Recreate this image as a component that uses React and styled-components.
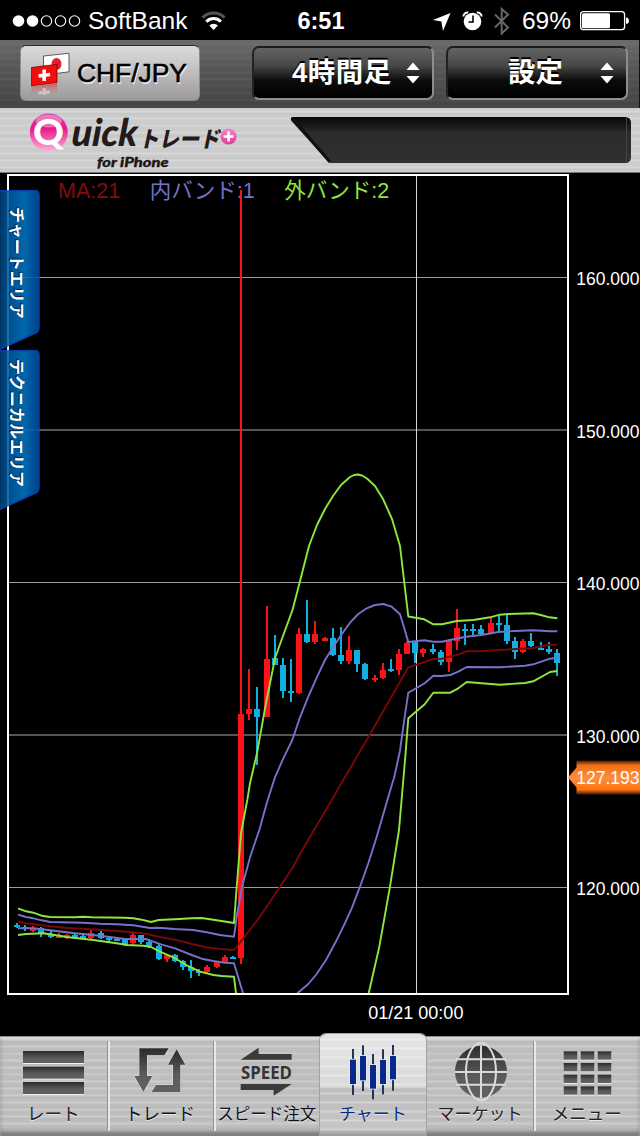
import React from 'react';
import styled, { createGlobalStyle, css } from 'styled-components';

const GlobalStyle = createGlobalStyle`
  * { box-sizing: border-box; }
  body {
    margin: 0;
    background: #000;
    font-family: "Liberation Sans", "Noto Sans CJK JP", sans-serif;
  }
  svg { display: block; flex: none; }
`;

const brushedLight = css`
  background-image:
    repeating-linear-gradient(180deg, rgba(255,255,255,0) 0 2px, rgba(255,255,255,.22) 3px 4px, rgba(255,255,255,0) 5px 7px),
    repeating-linear-gradient(180deg, rgba(90,90,90,0) 0 5px, rgba(90,90,90,.08) 6px, rgba(90,90,90,0) 7px 11px);
`;

const brushedDark = css`
  background-image:
    repeating-linear-gradient(180deg, rgba(255,255,255,0) 0 3px, rgba(255,255,255,.05) 4px, rgba(255,255,255,0) 6px 7px),
    linear-gradient(180deg, #6b696a 0, #575455 45%, #454243 100%);
`;

const Screen = styled.div`
  width: 640px;
  height: 1136px;
  display: flex;
  flex-direction: column;
  overflow: hidden;
  background: #000;
`;

/* Status bar */
const StatusBar = styled.div`
  height: 40px;
  flex: none;
  display: grid;
  grid-template-columns: 1fr auto 1fr;
  align-items: center;
  padding: 1px 10px 0 12px;
  color: #fff;
  font-size: 24.5px;
  line-height: 40px;
`;
const StatusGroup = styled.div`
  display: flex;
  align-items: center;
  justify-content: ${p => (p.$end ? 'flex-end' : 'flex-start')};
  gap: ${p => p.$gap}px;
`;
const Clock = styled.span`
  font-size: 23.5px;
  font-weight: 700;
`;

/* Toolbar */
const Toolbar = styled.div`
  height: 68px;
  flex: none;
  display: flex;
  align-items: flex-start;
  padding: 5px 11px 0 20px;
  border-right: 1px solid #111;
  background-color: #555;
  ${brushedDark}
`;
const PairButton = styled.button`
  width: 180px;
  height: 56px;
  display: flex;
  align-items: center;
  padding: 0 0 0 10px;
  gap: 7px;
  border: 1px solid #8d8b8b;
  border-top-color: #2c2a2b;
  border-radius: 6px;
  background: linear-gradient(180deg, #dcdada 0, #c5c3c3 40%, #9b9999 100%);
  font-family: inherit;
  font-size: 26.4px;
  color: #000;
  -webkit-text-stroke: .6px #000;
  text-shadow: 1px 2px 0 rgba(255,255,255,.75);
`;
const SelectButton = styled.button`
  width: 182px;
  height: 54px;
  margin: 1px 0 0 ${p => p.$left}px;
  display: grid;
  grid-template-columns: 1fr 14px;
  align-items: center;
  padding: 0 12px 0 ${p => p.$inset}px;
  border: 2px solid #8f8d8d;
  border-top-color: #1c1a1b;
  border-left-color: #232122;
  border-radius: 7px;
  background: linear-gradient(180deg, #636363 0, #474747 35%, #0c0c0c 65%, #000 100%);
  color: #fff;
  font-family: "Liberation Sans", "Noto Sans CJK JP", sans-serif;
  font-size: 27.4px;
  font-weight: 700;
  letter-spacing: ${p => p.$tracking}px;
  line-height: 1;
  text-align: left;
  text-shadow: 0 -2px 0 #000;
`;

/* Brand banner */
const Banner = styled.div`
  height: 65px;
  flex: none;
  display: flex;
  background-color: #cccccc;
  border-bottom: 1px solid #777;
  ${brushedLight}
`;

/* Chart */
const ChartPanel = styled.div`
  position: relative;
  height: 863px;
  flex: none;
`;
const Legend = styled.div`
  position: absolute;
  left: 58px;
  top: 4px;
  display: flex;
  gap: 29.5px;
  font-family: "Liberation Sans", "Noto Sans CJK JP", sans-serif;
  font-size: 21.5px;
  line-height: 28px;
`;
const LegendItem = styled.span`
  color: ${p => p.$color};
`;
const SideTabs = styled.div`
  position: absolute;
  left: 0;
  top: 17px;
  display: flex;
  flex-direction: column;
`;
const SideTab = styled.button`
  position: relative;
  width: 40px;
  height: 160px;
  padding: 0;
  border: 0;
  background: none;
  color: #fff;
`;
const TabLabel = styled.span`
  position: absolute;
  left: 8px;
  top: ${p => p.$top}px;
  writing-mode: vertical-rl;
  text-orientation: sideways;
  font-family: "Noto Sans CJK JP", sans-serif;
  font-size: 16px;
  font-weight: 700;
  line-height: 20px;
  white-space: nowrap;
  text-shadow: -1px 1px 1px #001c40;
`;

/* Bottom navigation */
const TabBar = styled.nav`
  height: 100px;
  flex: none;
  display: grid;
  grid-template-columns: repeat(6, minmax(0, 1fr));
  background-color: #bebebe;
  box-shadow: inset 0 1px 0 #8c8c8c, inset 0 3px 2px rgba(255,255,255,.5), inset 0 -5px 4px rgba(80,80,80,.6);
  ${brushedLight}
`;
const NavItem = styled.button`
  position: relative;
  display: flex;
  flex-direction: column;
  align-items: center;
  border: 0;
  padding: 0;
  margin: 5px 0;
  background: none;
  box-shadow: ${p => (p.$plain ? 'none' : '1px 0 0 #949292, 3px 0 0 #e8e8e8')};
  color: ${p => p.$color};
  ${p => p.$active && css`
    z-index: 1;
    margin: -2px 1px 0 0;
    padding-top: 7px;
    border-radius: 6px 6px 0 0;
    background:
      repeating-linear-gradient(180deg, rgba(255,255,255,0) 0 4px, rgba(255,255,255,.3) 5px 6px, rgba(255,255,255,0) 7px 9px),
      linear-gradient(180deg, #e6e6e6 0, #d9d9d9 52%, #bdbdbd 54%, #c6c6c6 92%, #999 100%);
    box-shadow: 0 0 0 1px #a2a0a0;
  `}
`;
const NavLabel = styled.span`
  font-family: "Noto Sans CJK JP", sans-serif;
  font-size: ${p => p.$size}px;
  line-height: 24px;
  white-space: nowrap;
  text-shadow: 0 1px 0 rgba(255,255,255,.7);
`;

const SignalDots = () => (
  <svg width="69" height="14" viewBox="12 13.5 69 14">
    {[18.5, 32.5, 46.5, 60.5, 74.5].map((x, i) => (
      <circle key={x} cx={x} cy="20.5" r={i < 2 ? 5.8 : 5.2} fill={i < 2 ? '#fff' : 'none'} stroke="#fff" strokeWidth={i < 2 ? 0 : 1.1} />
    ))}
  </svg>
);

const Wifi = () => (
  <svg width="26" height="20" viewBox="202 10 26 20" fill="none" strokeWidth="3">
    <path d="M203.6 16.6a15.5 15.5 0 0 1 22 0" stroke="#555" />
    <path d="M207.3 20.6a10.4 10.4 0 0 1 14.6 0" stroke="#fff" />
    <path d="M214.6 29l-4.3-4.6a6.2 6.2 0 0 1 8.6 0z" fill="#fff" />
  </svg>
);

const StatusIcons = () => (
  <svg width="80" height="28" viewBox="433 6 80 28">
    <path d="M450.5 12L443 30l-1.6-9.4L433 19z" fill="#fff" />
    <circle cx="472.5" cy="20.5" r="8.8" fill="#fff" />
    <path d="M463.4 15.6a4 4 0 0 1 4.8-4M481.6 15.6a4 4 0 0 0-4.8-4" stroke="#fff" strokeWidth="2" fill="none" />
    <path d="M473 14.5v6.5h-4.5" stroke="#000" strokeWidth="1.6" fill="none" />
    <path d="M495 13.5l13 13-6.3 6V8l6.3 5.5-13 13" stroke="#666" strokeWidth="2" fill="none" />
  </svg>
);

const Battery = () => (
  <svg width="50" height="20" viewBox="580 10.5 50 20">
    <rect x="580.6" y="11.2" width="44" height="18" rx="3" fill="none" stroke="#fff" strokeWidth="1.3" />
    <rect x="582" y="12.7" width="28" height="15" rx="1.5" fill="#fff" />
    <path d="M626 17.3h1.5q1.5 1 1.5 3t-1.5 3H626z" fill="#fff" />
  </svg>
);

const Flags = () => (
  <svg width="39" height="46" viewBox="31 56 39 46">
    <defs>
      <linearGradient id="mirror" x1="0" y1="0" x2="0" y2="1">
        <stop offset="0" stopColor="#d33" stopOpacity=".75" />
        <stop offset="1" stopColor="#c88" stopOpacity="0" />
      </linearGradient>
    </defs>
    <path d="M43.5 62L69 59.300v18.500L43.500 81z" fill="#fff" stroke="#222" strokeWidth=".7" />
    <ellipse cx="56.500" cy="70" rx="5" ry="6" fill="#e0202a" />
    <path d="M31.300 73.500L57 70.300v18.200l-25.700 3.300z" fill="#f20d0d" stroke="#600" strokeWidth=".7" />
    <path d="M44.200 75.500v11.500M38.500 82l11.600-1.500" stroke="#fff" strokeWidth="3.600" />
    <path d="M31.300 92.500L57 89.200v11.500H31.300z" fill="url(#mirror)" />
    <path d="M44.200 94v7M38.500 99l11.600-1" stroke="#fff" strokeOpacity=".4" strokeWidth="3" />
  </svg>
);

const UpDown = () => (
  <svg width="14" height="22" viewBox="0 0 14 22" fill="#fff">
    <path d="M7 .5l6.500 7.500H.5zM7 21.500l6.500-7.500H.5z" />
  </svg>
);

const BrandHeader = () => (
  <svg width="640" height="64" viewBox="0 108 640 64">
    <defs>
      <linearGradient id="pink" x1="0" y1="0" x2="0" y2="1">
        <stop offset="0" stopColor="#dc3c9c" />
        <stop offset=".4" stopColor="#e5198a" />
        <stop offset="1" stopColor="#fbb6dc" />
      </linearGradient>
      <linearGradient id="badge" x1="0" y1="0" x2="0" y2="1">
        <stop offset="0" stopColor="#f08cc4" />
        <stop offset="1" stopColor="#e0389a" />
      </linearGradient>
      <linearGradient id="slot" x1="0" y1="0" x2="0" y2="1">
        <stop offset="0" stopColor="#060606" />
        <stop offset=".35" stopColor="#2b2b2b" />
        <stop offset="1" stopColor="#303030" />
      </linearGradient>
    </defs>
    <circle cx="48.800" cy="132.500" r="19" fill="url(#pink)" />
    <ellipse cx="48.800" cy="121" rx="13" ry="6.500" fill="#fff" fillOpacity=".35" />
    <text x="33" y="145" textLength="31" lengthAdjust="spacingAndGlyphs" fontFamily="Lato" fontWeight="900" fontSize="36" fill="#fff">Q</text>
    <text transform="translate(71 146) skewX(-4)" textLength="66" lengthAdjust="spacingAndGlyphs" fontFamily="Lato" fontStyle="italic" fontWeight="900" fontSize="38" fill="#231a1c">uick</text>
    <text transform="translate(138.500 146.500) skewX(-12)" textLength="81" lengthAdjust="spacingAndGlyphs" fontFamily="Noto Sans CJK JP" fontWeight="900" fontSize="22" fill="#231a1c">トレード</text>
    <circle cx="228.600" cy="136.500" r="8" fill="url(#badge)" />
    <path d="M228.600 131.500v10M223.600 136.500h10" stroke="#fff" strokeWidth="2.600" />
    <text x="97" y="167" textLength="71.500" lengthAdjust="spacingAndGlyphs" fontFamily="Lato" fontStyle="italic" fontWeight="900" fontSize="14" fill="#1c1617" stroke="#1c1617" strokeWidth=".35">for iPhone</text>
    <path d="M293 117h332q6 0 6 6v34q0 6-6 6H331q-2 0-3.500-2L291.500 121q-2-4 1.500-4z" fill="url(#slot)" />
    <path d="M293 119l37 43" stroke="#111" strokeWidth="3" />
    <path d="M626.500 118v44" stroke="#444" strokeWidth="1" />
  </svg>
);

/* [direction, x, high, low, body top, body bottom] */
const toCandles = (rows, ox, oy) => rows.map(([d, x, h, l, t, b]) => [d, x / 3 + ox, h / 3 + oy, l / 3 + oy, t / 3 + oy, b / 3 + oy]);
const candles = [
  ...toCandles([
    ['d', 50, 188, 203, 195, 200], ['d', 75, 195, 212, 200, 207], ['u', 98, 198, 217, 206, 214],
    ['d', 123, 200, 230, 205, 223], ['d', 152, 212, 234, 224, 229], ['u', 177, 218, 234, 224, 233],
    ['u', 201, 222, 238, 224, 233], ['d', 225, 218, 236, 225, 231], ['d', 249, 226, 238, 229, 235],
    ['u', 273, 207, 236, 219, 233], ['d', 303, 210, 238, 219, 233], ['d', 327, 231, 248, 234, 240],
    ['d', 351, 232, 243, 237, 242], ['d', 375, 235, 259, 238, 254], ['u', 399, 220, 254, 225, 249],
    ['d', 423, 225, 251, 226, 246], ['d', 447, 240, 265, 246, 258], ['d', 477, 250, 300, 258, 297],
    ['u', 501, 284, 306, 284, 297], ['d', 525, 281, 307, 284, 304], ['d', 549, 300, 330, 303, 321],
    ['d', 573, 300, 354, 322, 334], ['d', 597, 326, 348, 332, 340], ['u', 621, 315, 342, 321, 336],
    ['u', 651, 304, 324, 305, 321], ['u', 675, 285, 307, 290, 305], ['d', 699, 288, 298, 290, 295],
  ], 0, 860),
  ['u', 241, 190, 964, 714, 957.5],
  ...toCandles([
    ['u', 87, 268, 420, 387, 402], ['d', 111, 320, 555, 387, 411], ['u', 141, 78, 411, 237, 411],
    ['d', 165, 165, 255, 234, 255], ['d', 189, 235, 353, 255, 332], ['d', 213, 237, 367, 332, 339],
    ['u', 237, 144, 343, 162, 339], ['d', 261, 60, 189, 162, 186], ['u', 285, 122, 191, 162, 186],
    ['u', 315, 172, 183, 173, 183], ['d', 339, 145, 228, 174, 225], ['d', 363, 141, 251, 225, 243],
    ['u', 387, 168, 251, 210, 243], ['d', 411, 210, 276, 210, 252], ['d', 435, 250, 301, 252, 297],
    ['u', 465, 285, 305, 293, 299], ['u', 489, 250, 296, 269, 293], ['d', 513, 237, 276, 268, 273],
    ['u', 537, 207, 285, 222, 270], ['u', 561, 183, 222, 189, 222],
  ], 220, 580),
  ...toCandles([
    ['d', 75, 185, 248, 186, 219], ['u', 99, 204, 232, 207, 219], ['d', 129, 192, 222, 208, 215],
    ['d', 153, 210, 254, 216, 246], ['u', 177, 177, 276, 182, 246], ['u', 201, 87, 209, 144, 182],
    ['d', 225, 132, 196, 146, 151], ['d', 249, 133, 167, 146, 151], ['d', 273, 136, 165, 146, 163],
    ['u', 303, 113, 163, 129, 160], ['d', 327, 108, 157, 128, 134], ['d', 351, 102, 191, 136, 182],
    ['d', 375, 172, 236, 182, 216], ['u', 399, 177, 218, 182, 216], ['d', 423, 158, 201, 183, 198],
    ['d', 453, 187, 210, 203, 207], ['d', 477, 187, 221, 206, 217], ['d', 501, 207, 288, 219, 249],
  ], 390, 580),
];

const seg = (ox, oy, pts) => pts.map(([x, y]) => `${(x / 3 + ox).toFixed(1)},${(y / 3 + oy).toFixed(1)}`).join(' ');
const GREEN = '#8fe63c';
const VIOLET = '#7472cc';
const MAROON = '#780808';

const lines = [
  [MAROON, [
    seg(0, 860, [[54, 185], [78, 190], [125, 196], [200, 204], [275, 208], [350, 213], [400, 217], [440, 222], [480, 231], [525, 239], [575, 252], [620, 262], [660, 267], [702, 270]]),
    seg(220, 780, [[70, 475], [115, 417], [150, 365], [180, 320], [217, 265], [250, 205], [300, 120], [345, 43], [370, 0]]),
    seg(220, 580, [[450, 463], [540, 305], [565, 262]]),
    seg(390, 580, [[130, 237], [156, 236], [205, 224], [228, 214], [280, 213], [430, 204], [475, 195], [502, 194]]),
  ]],
  [VIOLET, [
    seg(0, 860, [[54, 164], [78, 171], [100, 175], [125, 181], [150, 186], [250, 188], [300, 191], [350, 193], [400, 196], [450, 204], [475, 203], [525, 207], [580, 210], [620, 217], [660, 225], [702, 230]]),
    seg(220, 780, [[50, 410], [66, 320], [92, 225], [118, 150], [141, 67]]),
    seg(220, 580, [[143, 660], [165, 592], [190, 535], [217, 480], [240, 412], [265, 350], [290, 293], [315, 240], [340, 200], [365, 163], [390, 128], [415, 102], [440, 85], [465, 75], [490, 72], [515, 80], [540, 103], [553, 145], [565, 186]]),
    seg(390, 580, [[103, 181], [130, 185], [156, 185], [180, 180], [228, 170], [275, 165], [325, 156], [375, 153], [430, 151], [480, 154], [502, 154]]),
  ]],
  [VIOLET, [
    seg(0, 860, [[54, 205], [100, 205], [150, 211], [225, 220], [300, 227], [375, 237], [437, 237], [460, 245], [485, 254], [525, 265], [575, 285], [605, 296], [640, 303], [675, 308], [702, 310], [729, 400]]),
  ]],
  [VIOLET, [
    seg(220, 780, [[232, 640], [265, 612], [290, 582], [318, 540], [345, 490], [370, 440], [395, 385], [420, 320], [445, 250], [470, 170], [495, 85], [520, 0]]),
    seg(220, 580, [[522, 595], [540, 512], [552, 425], [565, 338]]),
    seg(390, 580, [[104, 310], [130, 287], [155, 288], [181, 285], [205, 275], [230, 261], [330, 262], [405, 257], [430, 253], [480, 236], [502, 233]]),
  ]],
  [GREEN, [
    seg(0, 860, [[54, 145], [78, 154], [100, 158], [125, 167], [150, 171], [225, 172], [250, 170], [275, 172], [375, 173], [400, 175], [425, 179], [453, 186], [476, 180], [525, 178], [575, 175], [605, 174], [650, 181], [702, 189]]),
    seg(220, 780, [[50, 320], [63, 160]]),
    seg(220, 580, [[82, 660], [90, 610], [111, 520], [135, 385], [165, 235], [190, 165], [217, 92], [241, 0]]),
    '309,546 317,525 325,509 333,496 341,485 350,477 354,475 358,474.5 362,475.5 367,478.5 375,486 383,499 392,519 400,546 408.3,616.5',
    seg(390, 580, [[103, 118], [130, 133], [156, 133], [200, 123], [250, 120], [300, 112], [330, 104], [355, 102], [430, 100], [452, 105], [478, 112], [502, 115]]),
  ]],
  [GREEN, [
    seg(0, 860, [[54, 225], [78, 222], [130, 220], [160, 224], [200, 231], [280, 240], [350, 250], [380, 255], [430, 257], [453, 261], [480, 275], [520, 292], [560, 316], [600, 335], [640, 345], [665, 348], [702, 350], [708, 400]]),
  ]],
  [GREEN, [
    seg(220, 780, [[446, 640], [478, 500], [510, 320], [537, 150], [550, 0]]),
    seg(220, 580, [[556, 530], [565, 415]]),
    seg(390, 580, [[104, 373], [130, 338], [181, 338], [205, 325], [230, 306], [330, 314], [405, 309], [430, 304], [480, 276], [502, 273]]),
  ]],
];

const prices = [[160, 285], [150, 438], [140, 589.5], [130, 743], [120, 895]];

const PriceChart = () => (
  <svg width="640" height="863" viewBox="0 173 640 863">
    <defs>
      <linearGradient id="tag" x1="0" y1="0" x2="0" y2="1">
        <stop offset="0" stopColor="#401800" />
        <stop offset=".14" stopColor="#f07018" />
        <stop offset=".5" stopColor="#ff8c3c" />
        <stop offset=".86" stopColor="#ff7410" />
        <stop offset="1" stopColor="#401800" />
      </linearGradient>
    </defs>
    <g shapeRendering="crispEdges">
      {[277, 582, 887].map(y => <rect key={y} x="9" y={y} width="558" height="1" fill="#9a9a9a" />)}
      {[429, 734].map(y => <rect key={y} x="9" y={y} width="558" height="2" fill="#555" />)}
      <rect x="416" y="175" width="1" height="818" fill="#d8d8d8" />
      {candles.map(([d, x, h, l, t, b]) => (
        <g key={x} fill={d === 'u' ? '#fb1318' : '#0fafe0'}>
          <rect x={Math.round(x) - 1} y={h} width="2" height={l - h} />
          <rect x={Math.round(x) - 3} y={t} width="6" height={Math.max(b - t, 2)} />
        </g>
      ))}
    </g>
    {lines.map(([color, parts], i) => (
      <polyline key={i} points={parts.join(' ')} fill="none" stroke={color} strokeWidth="1.9" strokeLinejoin="round" />
    ))}
    <path d="M8 174.5V994H568V174.5z" fill="none" stroke="#fff" strokeWidth="2" shapeRendering="crispEdges" />
    <path d="M568 777.5l8.500-10v-7H640v34h-63.500v-7z" fill="url(#tag)" />
    <g fontFamily="Liberation Sans" fontSize="17.5" fill="#fff">
      {prices.map(([p, y]) => <text key={p} x="576.2" y={y} textLength="63.3">{p}.000</text>)}
      <text x="576.2" y="784" textLength="63.3">127.193</text>
      <text x="368.3" y="1019" fontSize="18">01/21 00:00</text>
    </g>
  </svg>
);

const TabShape = () => (
  <svg width="40" height="160" viewBox="0 0 40 160" opacity=".88">
    <defs>
      <linearGradient id="blue" x1="0" y1="0" x2="1" y2="0">
        <stop offset="0" stopColor="#003d74" />
        <stop offset=".2" stopColor="#005a9e" />
        <stop offset=".62" stopColor="#0076c4" />
        <stop offset="1" stopColor="#004a9c" />
      </linearGradient>
    </defs>
    <path d="M0 .7H35q4 0 4 4V138q0 3-3 5L0 159.300" fill="url(#blue)" stroke="#0a4cc0" strokeWidth="1.400" />
  </svg>
);

const ShapeOverlay = styled.div`
  position: absolute;
  inset: 0;
`;

const NavIcon = ({ x, children, active }) => (
  <svg width="106.67" height="60" viewBox={`${x} 48 320 180`} fill={active ? '#08288a' : 'url(#steel)'}>
    <defs>
      <linearGradient id="steel" x1="0" y1="0" x2="0" y2="1">
        <stop offset="0" stopColor="#2c2b2a" />
        <stop offset=".6" stopColor="#5c5b5a" />
        <stop offset="1" stopColor="#626160" />
      </linearGradient>
    </defs>
    {children}
  </svg>
);

const nav = [
  { label: 'レート', size: 17.5, color: '#222', x: 0, icon: [78, 125, 171].map(y => (
    <g key={y}><rect x="69" y={y + 3} width="183" height="36" fill="#eee" /><rect x="69" y={y} width="183" height="36" /></g>
  )) },
  { label: 'トレード', size: 17.5, color: '#101028', x: 320, icon: (
    <g stroke="#e8e8e8" strokeWidth="3" paintOrder="stroke">
      <path d="M417 70h88l-13 21h-52v62h16l-27 48-27-48h15z" />
      <path d="M529 73l26 46h-15v83h-87l14-22h51v-61h-15z" />
    </g>
  ) },
  { label: 'スピード注文', size: 16.5, color: '#101028', x: 10, icon: (
    <g>
      <path d="M93 104l54-36v19h99v17zM93 177h153l-54 35v-17H93z" fill="#3c3b3b" />
      <text x="94" y="161" textLength="153" lengthAdjust="spacingAndGlyphs" fontFamily="Open Sans" fontWeight="700" fontSize="53" fill="#333">SPEED</text>
    </g>
  ) },
  { label: 'チャート', size: 17, color: '#0b2a80', x: 330, active: true, icon: [
    [420, 104, 177, 72, 210], [450, 93, 166, 61, 198], [480, 120, 191, 87, 223], [510, 105, 177, 73, 208], [540, 93, 163, 60, 197],
  ].map(([x, t, b, h, l]) => (
    <g key={x}>
      <path d={`M${x + 9} ${h}V${l}`} stroke="#243458" strokeWidth="6" />
      <rect x={x} y={t} width="18" height={b - t} stroke="#e8ecf4" strokeWidth="5" paintOrder="stroke" />
    </g>
  )) },
  { label: 'マーケット', size: 17, color: '#222', x: 5, icon: (
    <g>
      <circle cx="167" cy="140" r="78" />
      <g fill="none" stroke="#dadada" strokeWidth="6">
        <ellipse cx="167" cy="140" rx="45" ry="86" />
        <path d="M167 61v158M92 103h150M89 141h156M92 179h150" />
      </g>
    </g>
  ) },
  { label: 'メニュー', size: 17.5, color: '#222', x: 325, plain: true, icon: [79, 114, 149, 184].flatMap(y => [417, 468, 519].map(x => (
    <g key={`${x}-${y}`}><rect x={x} y={y + 3} width="41" height="25" fill="#eee" /><rect x={x} y={y} width="41" height="25" /></g>
  ))) },
];

export default function App() {
  return (
    <Screen>
      <GlobalStyle />
      <StatusBar>
        <StatusGroup $gap={7}>
          <SignalDots />
          <span>SoftBank</span>
          <span />
          <Wifi />
        </StatusGroup>
        <Clock>6:51</Clock>
        <StatusGroup $end $gap={9}>
          <StatusIcons />
          <span>69%</span>
          <Battery />
        </StatusGroup>
      </StatusBar>

      <Toolbar>
        <PairButton><Flags />CHF/JPY</PairButton>
        <SelectButton $left={52} $inset={38} $tracking={0.6}>4時間足<UpDown /></SelectButton>
        <SelectButton $left={12} $inset={60} $tracking={0}>設定<UpDown /></SelectButton>
      </Toolbar>

      <Banner><BrandHeader /></Banner>

      <ChartPanel>
        <PriceChart />
        <Legend>
          <LegendItem $color="#860b0b">MA:21</LegendItem>
          <LegendItem $color={VIOLET}>内バンド:1</LegendItem>
          <LegendItem $color={GREEN}>外バンド:2</LegendItem>
        </Legend>
        <SideTabs>
          <SideTab><ShapeOverlay><TabShape /></ShapeOverlay><TabLabel $top={17}>チャートエリア</TabLabel></SideTab>
          <SideTab><ShapeOverlay><TabShape /></ShapeOverlay><TabLabel $top={9}>テクニカルエリア</TabLabel></SideTab>
        </SideTabs>
      </ChartPanel>

      <TabBar>
        {nav.map(n => (
          <NavItem key={n.label} $active={n.active} $plain={n.plain} $color={n.color}>
            <NavIcon x={n.x} active={n.active}>{n.icon}</NavIcon>
            <NavLabel $size={n.size}>{n.label}</NavLabel>
          </NavItem>
        ))}
      </TabBar>
    </Screen>
  );
}
